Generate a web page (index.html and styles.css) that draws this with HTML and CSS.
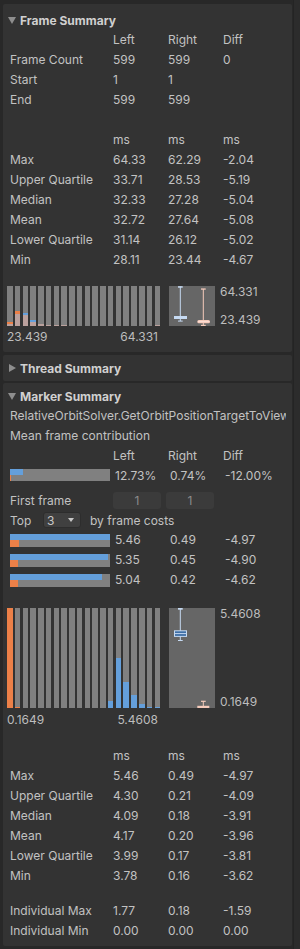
FILE: index.html
```html
<!DOCTYPE html>
<html>
<head>
<meta charset="utf-8">
<link rel="stylesheet" href="styles.css">
</head>
<body>
<div class="window">
  <div class="content">
    <section class="box box-frame">
      <div class="hdr"><span class="tri down"></span>Frame Summary</div>
      <div class="row"><span></span><span>Left</span><span>Right</span><span>Diff</span></div>
      <div class="row"><span>Frame Count</span><span>599</span><span>599</span><span>0</span></div>
      <div class="row"><span>Start</span><span>1</span><span>1</span><span></span></div>
      <div class="row"><span>End</span><span>599</span><span>599</span><span></span></div>
      <div class="spacer20"></div>
      <div class="row"><span></span><span>ms</span><span>ms</span><span>ms</span></div>
      <div class="row"><span>Max</span><span>64.33</span><span>62.29</span><span>-2.04</span></div>
      <div class="row"><span>Upper Quartile</span><span>33.71</span><span>28.53</span><span>-5.19</span></div>
      <div class="row"><span>Median</span><span>32.33</span><span>27.28</span><span>-5.04</span></div>
      <div class="row"><span>Mean</span><span>32.72</span><span>27.64</span><span>-5.08</span></div>
      <div class="row"><span>Lower Quartile</span><span>31.14</span><span>26.12</span><span>-5.02</span></div>
      <div class="row"><span>Min</span><span>28.11</span><span>23.44</span><span>-4.67</span></div>

      <div class="chart chart-small">
        <div class="hist">
          <div class="hbar"><i class="pk" style="height:2px"></i><i class="or" style="height:2px"></i></div>
          <div class="hbar"><i class="pk" style="height:12.5px"></i><i class="or" style="height:3px"></i></div>
          <div class="hbar"><i class="pk" style="height:11.5px"></i><i class="bl" style="height:2px"></i></div>
          <div class="hbar"><i class="pk" style="height:4.5px"></i><i class="bl" style="height:2px"></i></div>
          <div class="hbar"><i class="pk" style="height:2px"></i></div>
          <div class="hbar"><i class="pk" style="height:1px"></i></div>
          <div class="hbar"><i class="pk" style="height:1px"></i></div>
          <div class="hbar"><i class="pk" style="height:1px"></i></div>
          <div class="hbar"></div>
          <div class="hbar"></div>
          <div class="hbar"></div>
          <div class="hbar"></div>
          <div class="hbar"></div>
          <div class="hbar"></div>
          <div class="hbar"></div>
          <div class="hbar"></div>
          <div class="hbar"></div>
          <div class="hbar"></div>
          <div class="hbar"></div>
          <div class="hbar"><i class="pk" style="height:1px"></i></div>
        </div>
        <svg class="boxplot" width="46" height="40" viewBox="0 0 46 40">
          <rect x="0" y="0" width="46" height="40" fill="#666666"/>
          <line x1="11.3" y1="0.5" x2="11.3" y2="35" stroke="#c6daf2" stroke-width="1"/>
          <rect x="9" y="0.2" width="4.7" height="1.5" fill="#c6daf2"/>
          <rect x="5" y="30" width="13" height="3" fill="#c6daf2"/>
          <rect x="9" y="34.6" width="4.7" height="1" fill="#c6daf2"/>
          <line x1="34.3" y1="3" x2="34.3" y2="39" stroke="#f6cbbb" stroke-width="1"/>
          <rect x="32" y="2.4" width="4.7" height="1.3" fill="#f6cbbb"/>
          <rect x="28.3" y="34" width="12.7" height="3.3" rx="1.5" fill="#f6cbbb"/>
          <line x1="29" y1="35.6" x2="40.3" y2="35.6" stroke="#fde6dd" stroke-width="0.8"/>
          <rect x="32" y="38.8" width="4.7" height="1.2" fill="#f6cbbb"/>
        </svg>
        <div class="plabels"><span>64.331</span><span>23.439</span></div>
      </div>
      <div class="hlabels"><span>23.439</span><span>64.331</span></div>
    </section>

    <section class="box box-thread">
      <div class="hdr"><span class="tri right"></span>Thread Summary</div>
    </section>

    <section class="box box-marker">
      <div class="hdr"><span class="tri down"></span>Marker Summary</div>
      <div class="line name">RelativeOrbitSolver.GetOrbitPositionTargetToView</div>
      <div class="line">Mean frame contribution</div>
      <div class="row"><span></span><span>Left</span><span>Right</span><span>Diff</span></div>
      <div class="row barrow mean">
        <div class="bar"><div class="bt"><i class="bl" style="width:12.7px"></i></div><div class="bb"><i class="or" style="width:1px"></i></div></div>
        <span>12.73%</span><span>0.74%</span><span>-12.00%</span>
      </div>
      <div class="ffrow"><span class="fflabel">First frame</span><span class="field">1</span><span class="field">1</span></div>
      <div class="toprow"><span class="toplabel">Top</span><span class="dropdown"><span>3</span><span class="caret"></span></span><span class="bylabel">by frame costs</span></div>
      <div class="row barrow">
        <div class="bar"><div class="bt"><i class="bl" style="width:100px"></i></div><div class="bb"><i class="or" style="width:9px"></i></div></div>
        <span>5.46</span><span>0.49</span><span>-4.97</span>
      </div>
      <div class="row barrow">
        <div class="bar"><div class="bt"><i class="bl" style="width:98.3px"></i></div><div class="bb"><i class="or" style="width:8px"></i></div></div>
        <span>5.35</span><span>0.45</span><span>-4.90</span>
      </div>
      <div class="row barrow">
        <div class="bar"><div class="bt"><i class="bl" style="width:92.3px"></i></div><div class="bb"><i class="or" style="width:8px"></i></div></div>
        <span>5.04</span><span>0.42</span><span>-4.62</span>
      </div>

      <div class="chart chart-big">
        <div class="hist">
          <div class="hbar"><i class="or" style="height:100px"></i></div>
          <div class="hbar"><i class="or" style="height:1px"></i></div>
          <div class="hbar"></div>
          <div class="hbar"></div>
          <div class="hbar"></div>
          <div class="hbar"></div>
          <div class="hbar"></div>
          <div class="hbar"></div>
          <div class="hbar"></div>
          <div class="hbar"></div>
          <div class="hbar"></div>
          <div class="hbar"></div>
          <div class="hbar"></div>
          <div class="hbar"><i class="bl" style="height:7px"></i></div>
          <div class="hbar"><i class="bl" style="height:50px"></i></div>
          <div class="hbar"><i class="bl" style="height:26px"></i></div>
          <div class="hbar"><i class="bl" style="height:13px"></i></div>
          <div class="hbar"><i class="bl" style="height:4px"></i></div>
          <div class="hbar"><i class="bl" style="height:1.5px"></i></div>
          <div class="hbar"><i class="bl" style="height:1px"></i></div>
        </div>
        <svg class="boxplot" width="46" height="100" viewBox="0 0 46 100">
          <rect x="0" y="0" width="46" height="100" fill="#666666"/>
          <line x1="11.3" y1="1" x2="11.3" y2="32.5" stroke="#c6daf2" stroke-width="1"/>
          <rect x="9" y="0" width="4.7" height="1.7" fill="#c6daf2"/>
          <rect x="5.5" y="22.8" width="12" height="5.6" fill="#3d6ea6" stroke="#c6daf2" stroke-width="1"/>
          <line x1="5.5" y1="25.6" x2="17.5" y2="25.6" stroke="#c6daf2" stroke-width="1"/>
          <rect x="9" y="32" width="4.7" height="1" fill="#c6daf2"/>
          <line x1="34.3" y1="93" x2="34.3" y2="98" stroke="#f6cbbb" stroke-width="1"/>
          <rect x="32" y="92.7" width="4.7" height="1.2" fill="#f6cbbb"/>
          <rect x="28.3" y="97.8" width="12" height="2.2" fill="#f6cbbb"/>
        </svg>
        <div class="plabels"><span>5.4608</span><span>0.1649</span></div>
      </div>
      <div class="hlabels big"><span>0.1649</span><span>5.4608</span></div>

      <div class="spacer16"></div>
      <div class="row"><span></span><span>ms</span><span>ms</span><span>ms</span></div>
      <div class="row"><span>Max</span><span>5.46</span><span>0.49</span><span>-4.97</span></div>
      <div class="row"><span>Upper Quartile</span><span>4.30</span><span>0.21</span><span>-4.09</span></div>
      <div class="row"><span>Median</span><span>4.09</span><span>0.18</span><span>-3.91</span></div>
      <div class="row"><span>Mean</span><span>4.17</span><span>0.20</span><span>-3.96</span></div>
      <div class="row"><span>Lower Quartile</span><span>3.99</span><span>0.17</span><span>-3.81</span></div>
      <div class="row"><span>Min</span><span>3.78</span><span>0.16</span><span>-3.62</span></div>
      <div class="spacer15"></div>
      <div class="row"><span>Individual Max</span><span>1.77</span><span>0.18</span><span>-1.59</span></div>
      <div class="row"><span>Individual Min</span><span>0.00</span><span>0.00</span><span>0.00</span></div>
    </section>
  </div>
  <div class="scrollbar"></div>
</div>
</body>
</html>
```

FILE: styles.css
```css
html, body {
  margin: 0;
  padding: 0;
}
body {
  background: #282828;
  font-family: Inter, "Noto Sans", "Liberation Sans", sans-serif;
  font-size: 12px;
  color: #c2c2c2;
  width: 300px;
  height: 949px;
  overflow: hidden;
}
.window {
  display: flex;
  height: 949px;
}
.content {
  width: 293px;
  padding: 4px 0 0 3px;
  box-sizing: border-box;
}
.scrollbar {
  width: 7px;
  background: #2c2c2c;
  border-left: 1px solid #242424;
  box-sizing: border-box;
}
.box {
  background: #333333;
  width: 289px;
  border-radius: 2px;
}
.box-frame {
  padding: 6px 0 5px;
  margin-bottom: 3px;
}
.box-thread {
  padding: 3px 0;
  margin-bottom: 2px;
}
.box-marker {
  padding: 3px 0 5px;
}
.hdr {
  height: 20px;
  display: flex;
  align-items: center;
  padding-left: 5px;
  font-weight: 700;
  color: #d0d0d0;
}
.tri {
  display: inline-block;
  width: 0;
  height: 0;
  margin-right: 4px;
}
.tri.down {
  border-left: 4px solid transparent;
  border-right: 4px solid transparent;
  border-top: 7px solid #8e8e8e;
  margin-top: 1px;
  margin-right: 4px;
}
.tri.right {
  border-top: 4px solid transparent;
  border-bottom: 4px solid transparent;
  border-left: 7px solid #8e8e8e;
  margin-left: 1px;
  margin-right: 4px;
}
.row {
  display: grid;
  grid-template-columns: 103px 55px 55px 1fr;
  height: 20px;
  line-height: 20px;
  padding-left: 7px;
  white-space: nowrap;
}
.line {
  height: 20px;
  line-height: 20px;
  padding-left: 7px;
  white-space: nowrap;
  overflow: hidden;
}
.name {
  margin-right: 6px;
}
.spacer20 { height: 20px; }
.spacer16 { height: 16px; }
.spacer15 { height: 15px; }

.barrow {
  grid-template-columns: 105px 55px 55px 1fr;
  align-items: center;
}
.bar {
  width: 100px;
  height: 13px;
  background: #808080;
  display: flex;
  flex-direction: column;
}
.mean .bar {
  height: 12px;
  margin-top: -2px;
}
.bar .bt { height: 6px; display: flex; }
.bar .bb { flex: 1; display: flex; }
.bar i { display: block; height: 100%; }
.bl { background: #649fdb; }
.or { background: #ec8048; }
.pk { background: #bba19d; }

.ffrow {
  display: flex;
  align-items: center;
  height: 20px;
  margin-top: 4px;
  padding-left: 7px;
  white-space: nowrap;
}
.fflabel { width: 103px; }
.field {
  width: 48px;
  height: 17px;
  line-height: 17px;
  background: #3b3b3b;
  border-radius: 3px;
  color: #8c8c8c;
  text-align: center;
  margin-right: 5px;
}
.toprow {
  display: flex;
  align-items: center;
  height: 20px;
  padding-left: 7px;
  white-space: nowrap;
}
.toplabel { width: 33px; }
.dropdown {
  width: 38px;
  height: 16px;
  box-sizing: border-box;
  background: #404040;
  border: 1px solid #2d2d2d;
  border-radius: 3px;
  display: flex;
  align-items: center;
  justify-content: space-between;
  padding: 0 6px 0 3px;
  color: #c8c8c8;
}
.caret {
  width: 0;
  height: 0;
  border-left: 3px solid transparent;
  border-right: 3px solid transparent;
  border-top: 4px solid #c8c8c8;
}
.bylabel { margin-left: 9px; }

.chart {
  display: flex;
  margin-left: 4px;
}
.chart-small {
  margin-top: 16px;
  height: 40px;
}
.chart-big {
  margin-top: 18px;
  height: 100px;
}
.hist {
  width: 153px;
  height: 100%;
  display: flex;
  gap: 2.25px;
  margin-right: 9px;
}
.hbar {
  flex: 1;
  background: #808080;
  display: flex;
  flex-direction: column-reverse;
}
.hbar i { display: block; width: 100%; }
.boxplot { display: block; flex: none; }
.plabels {
  display: flex;
  flex-direction: column;
  justify-content: space-between;
  margin-left: 5px;
  line-height: 12px;
  color: #bdbdbd;
}
.hlabels {
  display: flex;
  justify-content: space-between;
  width: 151px;
  margin-left: 4px;
  margin-top: 1px;
  line-height: 20px;
  color: #bdbdbd;
}
.hlabels.big { margin-top: 2px; }
```
